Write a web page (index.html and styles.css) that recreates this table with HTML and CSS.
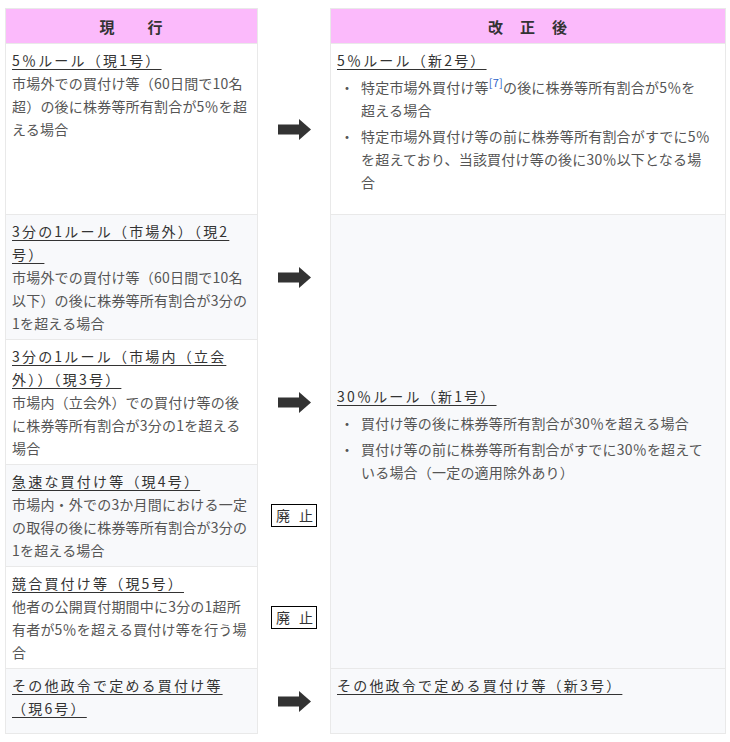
FILE: index.html
```html
<!DOCTYPE html>
<html lang="ja">
<head>
  <meta charset="utf-8">
  <title>現行と改正後の比較</title>
  <link rel="stylesheet" href="styles.css">
</head>
<body>
  <table class="compare">
    <colgroup>
      <col class="col-old">
      <col class="col-mid">
      <col class="col-new">
    </colgroup>
    <thead>
      <tr>
        <th class="old">現　　行</th>
        <th class="mid"></th>
        <th class="new">改　正　後</th>
      </tr>
    </thead>
    <tbody>
      <tr>
        <td class="old">
          <div class="rule">5％ルール（現1号）</div>
          <p>市場外での買付け等（60日間で10名超）の後に株券等所有割合が5％を超える場合</p>
        </td>
        <td class="mid"><svg class="arrow" width="33" height="21" viewBox="0 0 33 21"><rect x="0" y="5.5" width="22" height="10"/><polygon points="21,0 33,10.5 21,21"/></svg></td>
        <td class="new">
          <div class="rule">5％ルール（新2号）</div>
          <ul>
            <li>特定市場外買付け等<sup><a href="#note7">[7]</a></sup>の後に株券等所有割合が5％を<span class="nw">超える場合</span></li>
            <li>特定市場外買付け等の前に株券等所有割合がすでに5％を超えており、当該買付け等の後に30％以下となる場合</li>
          </ul>
        </td>
      </tr>
      <tr>
        <td class="old">
          <div class="rule">3分の1ルール（市場外）（現2号）</div>
          <p>市場外での買付け等（60日間で10名以下）の後に株券等所有割合が3分の1を超える場合</p>
        </td>
        <td class="mid"><svg class="arrow" width="33" height="21" viewBox="0 0 33 21"><rect x="0" y="5.5" width="22" height="10"/><polygon points="21,0 33,10.5 21,21"/></svg></td>
        <td class="new merged" rowspan="4">
          <div class="rule">30％ルール（新1号）</div>
          <ul>
            <li>買付け等の後に株券等所有割合が30％を超える場合</li>
            <li>買付け等の前に株券等所有割合がすでに30％を超えている場合（一定の適用除外あり）</li>
          </ul>
        </td>
      </tr>
      <tr>
        <td class="old">
          <div class="rule">3分の1ルール（市場内（立会外））（現3号）</div>
          <p>市場内（立会外）での買付け等の後に株券等所有割合が3分の1を超える場合</p>
        </td>
        <td class="mid"><svg class="arrow" width="33" height="21" viewBox="0 0 33 21"><rect x="0" y="5.5" width="22" height="10"/><polygon points="21,0 33,10.5 21,21"/></svg></td>
      </tr>
      <tr>
        <td class="old">
          <div class="rule">急速な買付け等（現4号）</div>
          <p>市場内・外での3か月間における一定の取得の後に株券等所有割合が3分の1を超える場合</p>
        </td>
        <td class="mid"><span class="abolished">廃 止</span></td>
      </tr>
      <tr>
        <td class="old">
          <div class="rule">競合買付け等（現5号）</div>
          <p>他者の公開買付期間中に3分の1超所有者が5％を超える買付け等を行う場合</p>
        </td>
        <td class="mid"><span class="abolished">廃 止</span></td>
      </tr>
      <tr class="last">
        <td class="old">
          <div class="rule">その他政令で定める買付け等（現6号）</div>
        </td>
        <td class="mid"><svg class="arrow" width="33" height="21" viewBox="0 0 33 21"><rect x="0" y="5.5" width="22" height="10"/><polygon points="21,0 33,10.5 21,21"/></svg></td>
        <td class="new">
          <div class="rule">その他政令で定める買付け等（新3号）</div>
        </td>
      </tr>
    </tbody>
  </table>
</body>
</html>
```

FILE: styles.css
```css
body {
  margin: 0;
  padding: 8px 5px;
  background: #fff;
  font-family: "Noto Sans CJK JP", "Noto Sans", sans-serif;
  font-size: 14px;
  line-height: 23px;
  color: #555;
}
.compare {
  border-collapse: collapse;
  table-layout: fixed;
  width: 720px;
}
.col-old {
  width: 252px;
}
.col-mid {
  width: 73px;
}
.col-new {
  width: 395px;
}
th, td {
  padding: 0;
}
th.old, th.new {
  height: 34px;
  background: #fbbafb;
  border: 1px solid #e9e9e9;
  color: #333;
  font-size: 15px;
  font-weight: bold;
  letter-spacing: 1px;
  text-align: center;
  vertical-align: middle;
}
td.old, td.new {
  border: 1px solid #e9e9e9;
  padding: 5px 7px 4px 6px;
  vertical-align: top;
  letter-spacing: 0.2px;
}
td.new {
  padding-right: 10px;
}
tbody tr:nth-child(even) td.old,
tbody tr:nth-child(even) td.new,
td.merged {
  background: #f8f9fb;
}
td.merged {
  vertical-align: middle;
}
td.mid {
  text-align: center;
  vertical-align: middle;
}
.arrow {
  display: block;
  margin: 0 auto;
  fill: #333;
}
.abolished {
  display: inline-block;
  border: 1px solid #000;
  padding: 0 0 0 4px;
  line-height: 21px;
  letter-spacing: 3px;
  color: #333;
}
.rule {
  color: #333;
  letter-spacing: 2.2px;
  text-decoration: underline;
  text-underline-offset: 3px;
}
p {
  margin: 0;
}
ul {
  list-style: none;
  margin: 4px 0 16px;
  padding: 0;
}
li {
  padding-left: 24px;
  text-indent: -21px;
}
li + li {
  margin-top: 3px;
}
li::before {
  content: "・";
  display: inline-block;
  width: 21px;
  text-indent: 0;
}
.nw {
  white-space: nowrap;
}
sup {
  line-height: 0;
  font-size: 11px;
}
sup a {
  color: #2a62c9;
  text-decoration: none;
}
tr.last td {
  height: 55px;
}
```
